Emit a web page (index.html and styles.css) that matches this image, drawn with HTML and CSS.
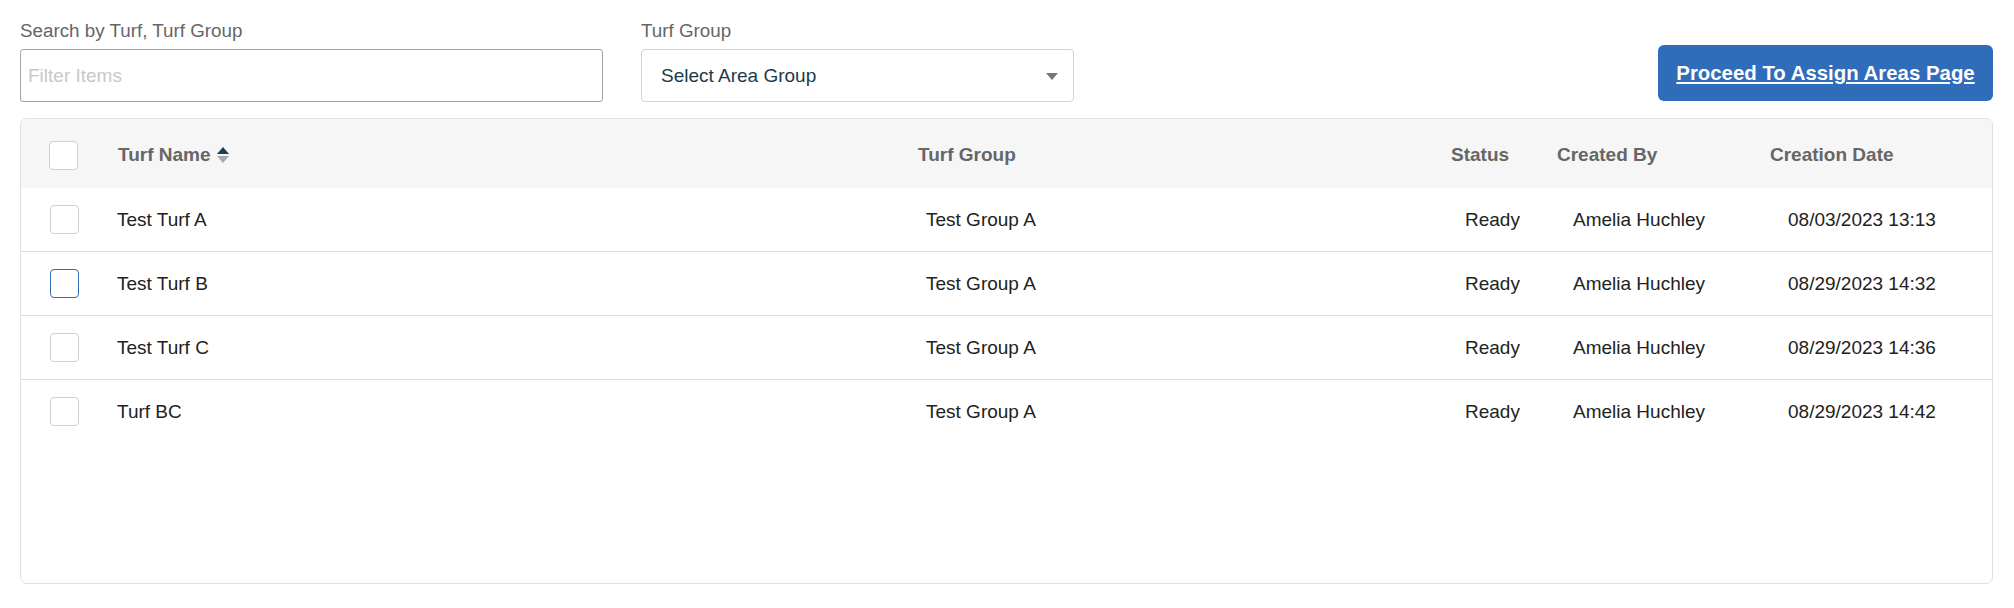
FILE: index.html
```html
<!DOCTYPE html>
<html lang="en">
<head>
    <meta charset="UTF-8">
    <meta name="viewport" content="width=device-width, initial-scale=1.0">
    <title>Turfs</title>
    <link rel="stylesheet" href="styles.css">
</head>
<body>
    <div class="page">
        <div class="toolbar">
            <div class="field field-search">
                <label for="filtro">Search by Turf, Turf Group</label>
                <input type="text" id="filtro" placeholder="Filter Items">
            </div>
            <div class="field field-group">
                <label>Turf Group</label>
                <div class="select">
                    <span>Select Area Group</span>
                    <svg class="select-arrow" width="12" height="7" viewBox="0 0 12 7"><polygon points="0,0 12,0 6,7" fill="#777"/></svg>
                </div>
            </div>
            <button class="btn-proceed">Proceed To Assign Areas Page</button>
        </div>

        <div class="card">
            <div class="thead">
                <div class="cell cell-check"><span class="check"></span></div>
                <div class="cell">Turf Name
                    <svg class="sort" width="12" height="16" viewBox="0 0 12 16">
                        <polygon points="0,7 6,0 12,7" fill="#1e3d4f"/>
                        <polygon points="0,9 12,9 6,16" fill="#a3adb3"/>
                    </svg>
                </div>
                <div class="cell">Turf Group</div>
                <div class="cell">Status</div>
                <div class="cell">Created By</div>
                <div class="cell">Creation Date</div>
            </div>

            <div class="row">
                <div class="cell cell-check"><span class="check"></span></div>
                <div class="cell">Test Turf A</div>
                <div class="cell">Test Group A</div>
                <div class="cell">Ready</div>
                <div class="cell">Amelia Huchley</div>
                <div class="cell">08/03/2023 13:13</div>
            </div>
            <div class="row">
                <div class="cell cell-check"><span class="check check-focus"></span></div>
                <div class="cell">Test Turf B</div>
                <div class="cell">Test Group A</div>
                <div class="cell">Ready</div>
                <div class="cell">Amelia Huchley</div>
                <div class="cell">08/29/2023 14:32</div>
            </div>
            <div class="row">
                <div class="cell cell-check"><span class="check"></span></div>
                <div class="cell">Test Turf C</div>
                <div class="cell">Test Group A</div>
                <div class="cell">Ready</div>
                <div class="cell">Amelia Huchley</div>
                <div class="cell">08/29/2023 14:36</div>
            </div>
            <div class="row">
                <div class="cell cell-check"><span class="check"></span></div>
                <div class="cell">Turf BC</div>
                <div class="cell">Test Group A</div>
                <div class="cell">Ready</div>
                <div class="cell">Amelia Huchley</div>
                <div class="cell">08/29/2023 14:42</div>
            </div>
        </div>
    </div>
</body>
</html>
```

FILE: styles.css
```css
body {
    margin: 0;
    font-family: "Liberation Sans", Arial, sans-serif;
    font-size: 19px;
    color: #222;
    background: #fff;
}
.page {
    padding: 20px 21px 0 20px;
}
.toolbar {
    display: flex;
    align-items: flex-end;
    gap: 38px;
}
.field label {
    display: block;
    height: 22px;
    line-height: 22px;
    margin-bottom: 7px;
    font-size: 18.8px;
    color: #666;
}
.field-search {
    width: 583px;
}
.field-search input {
    box-sizing: border-box;
    width: 100%;
    height: 53px;
    padding: 0 7px;
    border: 1px solid #a3a3a3;
    border-radius: 3px;
    font-family: inherit;
    font-size: 19px;
    color: #222;
    outline: none;
}
.field-search input::placeholder {
    color: #c8c8c8;
}
.field-group {
    width: 433px;
}
.select {
    box-sizing: border-box;
    height: 53px;
    display: flex;
    align-items: center;
    justify-content: space-between;
    padding: 0 15px 0 19px;
    border: 1px solid #d3d3d3;
    border-radius: 4px;
    color: #1b3a4b;
}
.select-arrow {
    margin-top: 2px;
}
.btn-proceed {
    margin-left: auto;
    height: 56px;
    width: 335px;
    margin-bottom: 1px;
    border: none;
    border-radius: 6px;
    background-color: #2f6dba;
    color: #fff;
    font-family: inherit;
    font-size: 20.4px;
    font-weight: bold;
    text-decoration: underline;
    cursor: pointer;
}
.card {
    box-sizing: border-box;
    margin-top: 16px;
    height: 466px;
    border: 1px solid #e0e0e0;
    border-radius: 7px;
    overflow: hidden;
}
.thead, .row {
    display: grid;
    align-items: center;
}
.thead {
    grid-template-columns: 97px 800px 533px 106px 213px 1fr;
    height: 69px;
    padding-top: 3px;
    box-sizing: border-box;
    background-color: #f6f6f6;
    font-weight: bold;
    color: #666;
}
.row {
    grid-template-columns: 96px 809px 539px 108px 215px 1fr;
    height: 63px;
}
.row + .row {
    border-top: 1px solid #ddd;
}
.cell {
    display: flex;
    align-items: center;
    white-space: nowrap;
}
.thead .cell-check {
    padding-left: 28px;
}
.row .cell-check {
    padding-left: 29px;
}
.check {
    box-sizing: border-box;
    width: 29px;
    height: 29px;
    border: 1px solid #cfcfcf;
    border-radius: 4px;
    background: #fff;
}
.check-focus {
    border-color: #2f6dba;
}
.sort {
    margin-left: 6px;
}
```
